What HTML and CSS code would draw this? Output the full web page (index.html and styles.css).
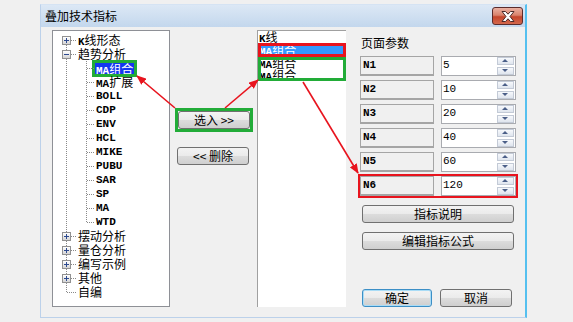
FILE: index.html
```html
<!DOCTYPE html>
<html lang="zh-CN">
<head>
  <meta charset="UTF-8" />
  <title>叠加技术指标</title>
  <link rel="stylesheet" href="styles.css">
</head>
<body>
  <div class="window">
    <div class="titlebar">
      <span class="title">叠加技术指标</span>
      <button class="close-btn" title="关闭">
        <svg width="16" height="11" viewBox="0 0 16 11">
          <path d="M2,0.5 L5.5,0.5 L8,3.2 L10.5,0.5 L14,0.5 L10,5.5 L14,10.5 L10.5,10.5 L8,7.8 L5.5,10.5 L2,10.5 L6,5.5 Z" fill="#fff" stroke="#4a2a2a" stroke-width="1"/>
        </svg>
      </button>
    </div>

    <div class="content">
      <!-- indicator tree -->
      <div class="tree">
        <ul class="tree-root">
          <li><div class="node"><span class="tog plus"></span><span class="en">K</span>线形态</div></li>
          <li>
            <div class="node"><span class="tog minus"></span>趋势分析</div>
            <ul class="tree-sub">
              <li><div class="node"><span class="sel"><span class="en">MA</span>组合</span></div></li>
              <li><div class="node"><span class="en">MA</span>扩展</div></li>
              <li><div class="node en">BOLL</div></li>
              <li><div class="node en">CDP</div></li>
              <li><div class="node en">ENV</div></li>
              <li><div class="node en">HCL</div></li>
              <li><div class="node en">MIKE</div></li>
              <li><div class="node en">PUBU</div></li>
              <li><div class="node en">SAR</div></li>
              <li><div class="node en">SP</div></li>
              <li><div class="node en">MA</div></li>
              <li><div class="node en">WTD</div></li>
            </ul>
          </li>
          <li><div class="node"><span class="tog plus"></span>摆动分析</div></li>
          <li><div class="node"><span class="tog plus"></span>量仓分析</div></li>
          <li><div class="node"><span class="tog plus"></span>编写示例</div></li>
          <li><div class="node"><span class="tog plus"></span>其他</div></li>
          <li><div class="node">自编</div></li>
        </ul>
      </div>

      <!-- add / remove -->
      <div class="mid">
        <div class="mark-green">
          <button class="btn">选入 &gt;&gt;</button>
        </div>
        <button class="btn btn-del">&lt;&lt; 删除</button>
      </div>

      <!-- chosen indicators -->
      <div class="picked">
        <div class="pick-item"><span class="en">K</span>线</div>
        <div class="pick-item active"><span class="en">MA</span>组合</div>
        <div class="pick-group">
          <div class="pick-item"><span class="en">MA</span>组合</div>
          <div class="pick-item"><span class="en">MA</span>组合</div>
        </div>
      </div>

      <!-- parameters -->
      <div class="params">
        <h2>页面参数</h2>
        <div class="param-row">
          <div class="param-name">N1</div>
          <div class="param-input"><span class="param-value">5</span><span class="spin"><i class="up"></i><i class="down"></i></span></div>
        </div>
        <div class="param-row">
          <div class="param-name">N2</div>
          <div class="param-input"><span class="param-value">10</span><span class="spin"><i class="up"></i><i class="down"></i></span></div>
        </div>
        <div class="param-row">
          <div class="param-name">N3</div>
          <div class="param-input"><span class="param-value">20</span><span class="spin"><i class="up"></i><i class="down"></i></span></div>
        </div>
        <div class="param-row">
          <div class="param-name">N4</div>
          <div class="param-input"><span class="param-value">40</span><span class="spin"><i class="up"></i><i class="down"></i></span></div>
        </div>
        <div class="param-row">
          <div class="param-name">N5</div>
          <div class="param-input"><span class="param-value">60</span><span class="spin"><i class="up"></i><i class="down"></i></span></div>
        </div>
        <div class="param-row mark-red">
          <div class="param-name">N6</div>
          <div class="param-input"><span class="param-value">120</span><span class="spin"><i class="up"></i><i class="down"></i></span></div>
        </div>

        <button class="btn btn-wide first">指标说明</button>
        <button class="btn btn-wide">编辑指标公式</button>

        <div class="footer">
          <button class="btn btn-ok">确定</button>
          <button class="btn btn-cancel">取消</button>
        </div>
      </div>
    </div>
  </div>

  <!-- annotation arrows -->
  <svg class="arrows" width="573" height="322" viewBox="0 0 573 322">
    <defs>
      <marker id="head" markerWidth="10" markerHeight="8" refX="9" refY="4" orient="auto" markerUnits="userSpaceOnUse">
        <path d="M0,0 L10,4 L0,8 Z" fill="#e8141e"/>
      </marker>
    </defs>
    <line x1="175" y1="108" x2="137" y2="76" stroke="#e8141e" stroke-width="1.6" marker-end="url(#head)"/>
    <line x1="225" y1="108" x2="258" y2="80" stroke="#e8141e" stroke-width="1.6" marker-end="url(#head)"/>
    <line x1="303" y1="82" x2="358" y2="173" stroke="#e8141e" stroke-width="1.6" marker-end="url(#head)"/>
  </svg>
</body>
</html>
```

FILE: styles.css
```css
body {
  margin: 0;
  background: #f0f0f0;
  font-family: "Noto Sans CJK SC", sans-serif;
  font-size: 12px;
  color: #000;
}

/* Window frame */
.window {
  box-sizing: border-box;
  width: 487px;
  height: 314px;
  margin: 4px 0 0 40px;
  border: 1px solid #bcd1ea;
  border-top-color: #d5e3f3;
  border-right: 2px solid #55c0ef;
  background: #f0f0f0;
}

.titlebar {
  display: flex;
  justify-content: space-between;
  align-items: flex-start;
  height: 22px;
  padding: 0 2px 0 4px;
  background: linear-gradient(#dce8f5, #c3d7ed);
}

.title {
  line-height: 14px;
  margin-top: 4px;
}

.close-btn {
  display: flex;
  align-items: center;
  justify-content: center;
  width: 31px;
  height: 18px;
  margin-top: 2px;
  padding: 0;
  border: 1px solid #5a2b2b;
  border-radius: 3px;
  background: linear-gradient(#eab1a2 0%, #d9826c 45%, #c4452c 55%, #d4684c 100%);
}

.content {
  display: flex;
  padding: 3px 0 0 11px;
}

.en {
  font-family: "Liberation Mono", monospace;
  font-weight: bold;
  font-size: 11px;
}

/* Tree */
.tree {
  box-sizing: border-box;
  width: 118px;
  height: 277px;
  padding-top: 2px;
  border: 1px solid #8e9096;
  background: #fff;
}

.tree ul {
  list-style: none;
  margin: 0;
  padding: 0;
  position: relative;
}

.tree-root {
  margin-left: 13px !important;
}

.tree-sub {
  margin-left: 20px !important;
}

.tree-root::before,
.tree-sub::before {
  content: "";
  position: absolute;
  left: 0;
  bottom: 7px;
  border-left: 1px dotted #8a8a8a;
}

.tree-root::before { top: 7px; }
.tree-sub::before { top: 0; }

.node {
  position: relative;
  height: 14px;
  line-height: 14px;
  padding-left: 12px;
  white-space: nowrap;
}

.node::before {
  content: "";
  position: absolute;
  left: 1px;
  top: 7px;
  width: 9px;
  border-top: 1px dotted #8a8a8a;
}

.tree-sub .node {
  padding-left: 10px;
}

.tree-sub .node::before {
  width: 7px;
}

.tog {
  position: absolute;
  left: -4px;
  top: 3px;
  box-sizing: border-box;
  width: 9px;
  height: 9px;
  border: 1px solid #919191;
  background: linear-gradient(#ffffff, #d4d4d4);
  z-index: 1;
}

.tog::before,
.tog::after {
  content: "";
  position: absolute;
  background: #2d4a8f;
}

.tog::before {
  left: 1px;
  top: 3px;
  width: 5px;
  height: 1px;
}

.tog.plus::after {
  left: 3px;
  top: 1px;
  width: 1px;
  height: 5px;
}

.sel {
  display: inline-block;
  vertical-align: top;
  margin: 2px 0 0 -1px;
  padding: 0 1px;
  height: 11px;
  line-height: 11px;
  background: #1436f0;
  color: #fff;
  outline: 3px solid #22ac38;
}

/* Middle buttons */
.mid {
  box-sizing: border-box;
  width: 87px;
  padding-left: 5px;
  display: flex;
  flex-direction: column;
  align-items: flex-start;
}

.mark-green {
  margin-top: 78px;
  border: 3px solid #22ac38;
  line-height: 0;
}

.btn {
  box-sizing: border-box;
  width: 72px;
  height: 18px;
  padding: 0;
  border: 1px solid #707070;
  border-radius: 3px;
  background: linear-gradient(#f3f3f3 0%, #ebebeb 48%, #dcdcdc 52%, #cfcfcf 100%);
  font-family: "Noto Sans CJK SC", sans-serif;
  font-size: 12px;
  line-height: 16px;
  color: #000;
}

.btn-del {
  margin: 15px 0 0 2px;
}

/* Chosen list */
.picked {
  box-sizing: border-box;
  width: 89px;
  height: 277px;
  border-left: 1px solid #a0a0a0;
  border-top: 1px solid #a0a0a0;
  background: #fff;
}

.pick-item {
  height: 12px;
  line-height: 12px;
  padding-left: 1px;
  white-space: nowrap;
}

.pick-item.active {
  height: 14px;
  line-height: 14px;
  background: #3399ff;
  color: #fff;
  outline: 3px solid #e8141e;
  outline-offset: -3px;
}

.pick-group {
  outline: 3px solid #22ac38;
  outline-offset: -3px;
}

/* Parameters */
.params {
  padding-left: 14px;
  display: flex;
  flex-direction: column;
  align-items: flex-start;
}

.params h2 {
  margin: 6px 0 6px 1px;
  font-size: 12px;
  font-weight: normal;
  line-height: 14px;
}

.param-row {
  display: flex;
  height: 20px;
  margin-bottom: 4px;
}

.param-name {
  box-sizing: border-box;
  width: 74px;
  margin-right: 7px;
  padding: 1px 0 0 2px;
  border: 1px solid #a5a5a5;
  border-bottom-width: 2px;
  font-family: "Liberation Mono", monospace;
  font-weight: bold;
  font-size: 11px;
  line-height: 14px;
}

.param-input {
  box-sizing: border-box;
  width: 75px;
  display: flex;
  border: 1px solid #a9abb0;
  background: #fff;
}

.param-value {
  flex: 1;
  padding: 1px 0 0 1px;
  font-family: "Liberation Mono", monospace;
  font-size: 11px;
  line-height: 14px;
}

.spin {
  width: 17px;
  display: flex;
  flex-direction: column;
  gap: 2px;
  padding: 0 1px 0 0;
}

.spin i {
  position: relative;
  box-sizing: border-box;
  height: 8px;
  border: 1px solid #c3cad6;
  background: linear-gradient(#f7f9fc, #dfe5ee);
}

.spin i::after {
  content: "";
  position: absolute;
  left: 4px;
  top: 1px;
  border-left: 3px solid transparent;
  border-right: 3px solid transparent;
}

.spin .up::after {
  border-bottom: 3px solid #4b5f88;
}

.spin .down::after {
  border-top: 3px solid #4b5f88;
}

.mark-red {
  outline: 2px solid #e8141e;
}

.btn-wide {
  width: 152px;
  margin: 9px 0 0 2px;
}

.btn-wide.first {
  margin-top: 5px;
}

.footer {
  display: flex;
  gap: 8px;
  margin: 39px 0 0 2px;
}

.btn-ok {
  width: 70px;
  border-color: #3c8fc6;
  box-shadow: inset 0 0 0 1px #a9dcf6;
}

/* Annotation overlay */
.arrows {
  position: absolute;
  left: 0;
  top: 0;
  pointer-events: none;
}
```
